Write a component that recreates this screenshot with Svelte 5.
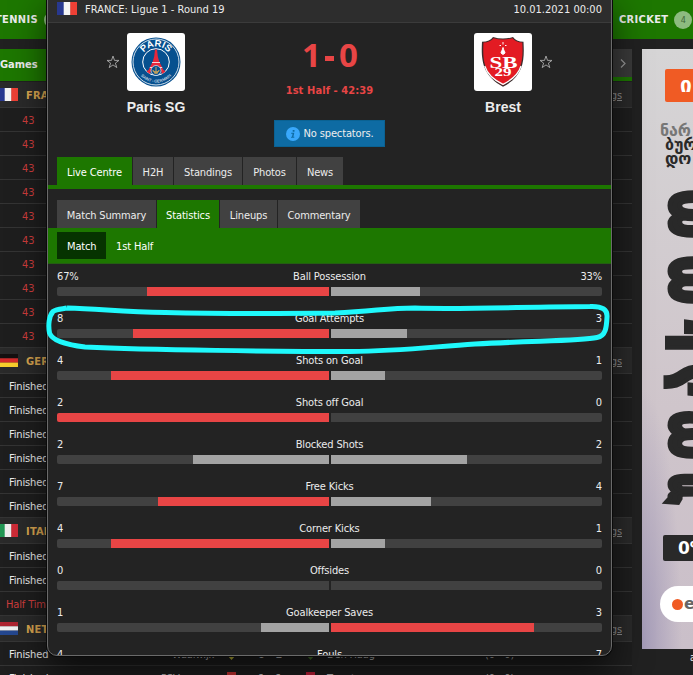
<script>
    const matchTabs = [
        { label: "Live Centre", width: 75, active: true },
        { label: "H2H", width: 40 },
        { label: "Standings", width: 68 },
        { label: "Photos", width: 53 },
        { label: "News", width: 46 },
    ];

    const centreTabs = [
        { label: "Match Summary", width: 99 },
        { label: "Statistics", width: 62, active: true },
        { label: "Lineups", width: 57 },
        { label: "Commentary", width: 82 },
    ];

    const stats = [
        { name: "Ball Possession", home: 67, away: 33, unit: "%" },
        { name: "Goal Attempts", home: 8, away: 3 },
        { name: "Shots on Goal", home: 4, away: 1 },
        { name: "Shots off Goal", home: 2, away: 0 },
        { name: "Blocked Shots", home: 2, away: 2 },
        { name: "Free Kicks", home: 7, away: 4 },
        { name: "Corner Kicks", home: 4, away: 1 },
        { name: "Offsides", home: 0, away: 0 },
        { name: "Goalkeeper Saves", home: 1, away: 3 },
        { name: "Fouls", home: 4, away: 7 },
    ];

    const leagues = [
        { code: "FRANCE", flag: "fr", rows: Array(10).fill("43") },
        { code: "GERMANY", flag: "de", rows: Array(6).fill("Finished") },
        { code: "ITALY", flag: "it", rows: ["Finished", "Finished", "Half Time"] },
        { code: "NETHERLANDS", flag: "nl", rows: ["Finished", "Finished"] },
    ];

    const dutch = [
        { home: "Waalwijk", homeX: 172, score: "0 - 1", away: "Den Haag", ht: "(0 - 0)", c1: "#c9c23a", c2: "#4c7a2f" },
        { home: "PSV", homeX: 161, score: "1 - 1", away: "Twente", ht: "(0 - 0)", c1: "#c33", c2: "#c8203a" },
    ];

    // home se redondea hacia abajo, away se queda con el resto
    const homeShare = (s) => (s.home + s.away ? Math.floor((s.home / (s.home + s.away)) * 100) : 0);
    const awayShare = (s) => (s.home + s.away ? 100 - homeShare(s) : 0);

    // letras del banner, de abajo hacia arriba
    const bannerLetters = [
        { ch: "უ", x: 77, y: 456, len: 33 },
        { ch: "ფ", x: 77, y: 411, len: 51 },
        { ch: "ა", x: 77, y: 349, len: 35 },
        { ch: "ს", x: 98, y: 303, len: 38 },
        { ch: "ო", x: 77, y: 256, len: 50 },
        { ch: "დ", x: 77, y: 190, len: 50 },
    ];
</script>

{#snippet flag(kind)}
    <svg class="flag" viewBox="0 0 20 13" preserveAspectRatio="none">
        {#if kind === "fr"}
            <rect width="7" height="13" fill="#28388f" /><rect x="6.7" width="7" height="13" fill="#f4f4f4" /><rect x="13.3" width="6.7" height="13" fill="#ee4035" />
        {:else if kind === "de"}
            <rect width="20" height="4.4" fill="#151010" /><rect y="4.3" width="20" height="4.4" fill="#d62a2a" /><rect y="8.6" width="20" height="4.4" fill="#f8cf2c" />
        {:else if kind === "it"}
            <rect width="7" height="13" fill="#219653" /><rect x="6.7" width="7" height="13" fill="#eee" /><rect x="13.3" width="6.7" height="13" fill="#cf2b37" />
        {:else}
            <rect width="20" height="4.4" fill="#ae2431" /><rect y="4.3" width="20" height="4.4" fill="#f0f0f0" /><rect y="8.6" width="20" height="4.4" fill="#24478f" />
        {/if}
    </svg>
{/snippet}

{#snippet star()}
    <svg class="star" viewBox="0 0 14 14"><path d="M7 1 8.5 5.4H13L9.4 8.1 10.8 12.6 7 9.9 3.2 12.6 4.6 8.1 1 5.4H5.5Z" /></svg>
{/snippet}

<div class="page">
    <nav class="sports">
        <span class="sport">TENNIS <i class="badge">8</i></span>
        <span class="sport right">CRICKET <i class="badge">4</i></span>
    </nav>

    <div class="columns">
        <div class="games">
            <div class="games-bar">
                <span class="games-tab">Games</span>
                <span class="next">
                    <svg viewBox="0 0 8 10"><path d="M2 1 6 5 2 9" /></svg>
                </span>
            </div>
            {#each leagues as league}
                <div class="league">
                    {@render flag(league.flag)}
                    <b>{league.code}</b>
                    <u>Standings</u>
                </div>
                {#each league.rows as row, i}
                    <div class="row" class:live={row === "43"} class:half={row === "Half Time"}>
                        <span class="state">{row}</span>
                        {#if league.flag === "nl"}
                            <svg class="fixture" viewBox="0 0 632 24">
                                <text x={dutch[i].homeX} y="16">{dutch[i].home}</text>
                                <path d="M227 6h9v7l-4.500 5-4.500-5z" fill={dutch[i].c1} />
                                <text x="258" y="16" font-weight="bold">{dutch[i].score}</text>
                                <path d="M306 6h9v7l-4.500 5-4.500-5z" fill={dutch[i].c2} />
                                <text x="327" y="16">{dutch[i].away}</text>
                                <text x="485" y="16">{dutch[i].ht}</text>
                            </svg>
                        {/if}
                    </div>
                {/each}
            {/each}
        </div>

        <aside>
            <div class="banner">
                <div class="offer">ი</div>
                <p class="lead">ნარ</p>
                <p>ბურ</p>
                <p>დო</p>
                <div class="zero">0%</div>
                <div class="brand"><span class="dot"></span>e</div>
                <svg class="big" viewBox="0 0 51 600">
                    {#each bannerLetters as l}
                        <text transform="translate({l.x} {l.y}) rotate(-90)" textLength={l.len} lengthAdjust="spacingAndGlyphs">{l.ch}</text>
                    {/each}
                </svg>
            </div>
            <div class="ad-note">ad</div>
        </aside>
    </div>

    <main class="popup">
        <header>
            {@render flag("fr")}
            <span class="round">FRANCE: Ligue 1 - Round 19</span>
            <time>10.01.2021 00:00</time>
        </header>

        <section class="teams">
            <div class="team home">
                {@render star()}
                <div class="club">
                    <div class="logo">
                        <svg viewBox="0 0 58 58">
                            <defs>
                                <path id="arcTop" d="M13.500 29a15.500 15.500 0 0 1 31 0" />
                                <path id="arcBottom" d="M8.500 29a20.500 20.500 0 0 0 41 0" />
                            </defs>
                            <circle cx="29" cy="29" r="24.500" fill="#06508f" />
                            <circle cx="29" cy="29" r="23" fill="none" stroke="#fff" stroke-width=".8" />
                            <circle cx="29" cy="29" r="13.300" fill="#06508f" stroke="#fff" stroke-width="1" />
                            <path d="M28 16.500h2l.8 7 1.400 5 4 8 2.300 2-3.500 2.500c-1-5-3-6.500-6-6.500s-5 1.500-6 6.500L19.500 38.500l2.300-2 4-8 1.400-5z" fill="#e8273b" />
                            <path d="M25 29.500h8M22.800 34.500h12.400" stroke="#fff" stroke-width=".8" />
                            <circle cx="29" cy="37.500" r="5" fill="#06508f" stroke="#e9eef5" stroke-width=".7" />
                            <path d="M29 34v7M26 37q0 2 3 2 3 0 3-2M27 40h4" stroke="#c1a05b" stroke-width="1.100" fill="none" />
                            <text class="crest-top"><textPath href="#arcTop" startOffset="50%">PARIS</textPath></text>
                            <text class="crest-low"><textPath href="#arcBottom" startOffset="50%">SAINT - GERMAIN</textPath></text>
                        </svg>
                    </div>
                    <b>Paris SG</b>
                </div>
            </div>

            <div class="result">
                <div class="score"><span>1</span><span class="dash"></span><span>0</span></div>
                <div class="clock">1st Half - 42:39</div>
                <div class="notice">
                    <svg viewBox="0 0 14 14">
                        <circle cx="7" cy="7" r="7" fill="#39a8fb" />
                        <path d="M6.700 3h1.800v1.700H6.700zM5.300 5.700h3l-.9 4h1l-.2 1.100H5l.2-1.100h.8l.6-2.900H5.100z" fill="#0e6ba3" />
                    </svg>
                    No spectators.
                </div>
            </div>

            <div class="team away">
                <div class="club">
                    <div class="logo">
                        <svg viewBox="0 0 58 58">
                            <path d="M19 4q10 3 20 0 3 4.500 10.500 4.800c1 18 .5 34-20.500 45C8 42.500 7 26.500 8 8.800q8-.3 11-4.800z" fill="#3a2d2d" />
                            <path d="M19.500 5.200q9.500 2.500 19 0 3 4 9.800 4.400c1 17 .2 32-19.300 42.600C9.500 41.500 8.500 26.700 9.500 9.600q7-.4 10-4.400z" fill="#e31b23" />
                            <path d="M10.800 33c2.500 8.500 8 13.500 18.200 18.300C39 46.500 44.500 41.500 47 33" fill="none" stroke="#fff" stroke-width="1.300" />
                            <path d="M29 14.500c.4 2.500 2 4 2 5.500L29 21.500 27 20c0-1.500 1.600-3 2-5.500zM29 9v2.500M25.500 12.500h1.500M31 12.500h1.500" fill="#fff" stroke="#fff" stroke-width="1" />
                            <text class="sb" x="15.500" y="35" textLength="28" lengthAdjust="spacingAndGlyphs">SB</text>
                            <text class="nr" x="20.500" y="43" textLength="17" lengthAdjust="spacingAndGlyphs">29</text>
                        </svg>
                    </div>
                    <b>Brest</b>
                </div>
                {@render star()}
            </div>
        </section>

        <div class="tabs main-tabs">
            {#each matchTabs as tab}
                <div class="tab" class:active={tab.active} style="width: {tab.width}px">{tab.label}</div>
            {/each}
        </div>
        <div class="tabs">
            {#each centreTabs as tab}
                <div class="tab" class:active={tab.active} style="width: {tab.width}px">{tab.label}</div>
            {/each}
        </div>
        <div class="periods">
            <span class="period chosen">Match</span>
            <span class="period">1st Half</span>
        </div>

        <section class="stats">
            {#each stats as s}
                <div class="stat">
                    <div class="labels">
                        <span>{s.home}{s.unit ?? ""}</span>
                        <span class="name">{s.name}</span>
                        <span>{s.away}{s.unit ?? ""}</span>
                    </div>
                    <div class="bars">
                        <div class="bar left"><i class:lead={s.home > s.away} style="width: {homeShare(s)}%"></i></div>
                        <div class="bar"><i class:lead={s.away > s.home} style="width: {awayShare(s)}%"></i></div>
                    </div>
                </div>
            {/each}
        </section>
    </main>

    <svg class="marker" viewBox="0 0 693 675">
        <path d="M67 308C100 309 122 311.500 165 312.500C230 314 290 313.500 335 313C375 311.500 385 308 415 308C460 309.500 520 307 590 306.500C603 306 607.500 310 607 317C606.500 327 606 336 597 337.500C580 341 540 340.500 475 344C430 347 400 351 350 351.500C280 351.500 150 350 85 347C66 345 52 340 49.500 333C48 325 49 316 53 311.500C57 308.500 63 309 67 308" />
    </svg>
</div>

<style>
:global(body) {
    background: #202020;
}

.page {
    position: relative;
    width: 693px;
    height: 675px;
    overflow: hidden;
    background: #212121;
    color: #ececec;
    font: 11px/14px "DejaVu Sans Condensed", "DejaVu Sans", sans-serif;
    font-stretch: condensed;
    letter-spacing: -0.14px;
}

.sports {
    display: flex;
    justify-content: space-between;
    height: 39px;
    background: #1d7700;
    font-weight: bold;
    letter-spacing: 0.35px;
}

.sport {
    display: flex;
    align-items: center;
    gap: 6px;
    margin-left: -5px;
    padding-top: 1px;
}

.sport.right {
    width: 74px;
    margin: 0;
    flex: none;
}

.badge {
    display: flex;
    align-items: center;
    justify-content: center;
    flex: none;
    width: 18px;
    height: 18px;
    border-radius: 50%;
    background: #8dbb80;
    color: #41683a;
    font-size: 9px;
    font-style: normal;
    font-weight: normal;
}

.columns {
    display: flex;
    gap: 10px;
    padding-top: 10px;
}

.games {
    width: 632px;
    flex: none;
}

.games-bar {
    display: flex;
    justify-content: space-between;
    height: 28px;
    margin-bottom: 1px;
    border-bottom: 4px solid #1d7700;
    background: #3a3a3a;
}

.games-tab {
    width: 60px;
    height: 32px;
    background: #1d7700;
    font-weight: bold;
    line-height: 31px;
    letter-spacing: 0;
}

.next {
    width: 13px;
    padding-top: 9px;
}

.next svg {
    width: 8px;
    height: 11px;
}

.next path {
    fill: none;
    stroke: #999;
    stroke-width: 1.2;
}

.league {
    display: flex;
    align-items: center;
    box-sizing: border-box;
    height: 26px;
    padding: 2px 10px 0 0;
    border-bottom: 1px solid #363636;
    background: #2a2a2a;
}

.league .flag {
    margin: -2px 0 0 -2px;
}

.league b {
    flex: 1;
    margin-left: 8px;
    color: #dba650;
    letter-spacing: 0.2px;
}

.league u {
    color: #8d8d8d;
}

.row {
    position: relative;
    box-sizing: border-box;
    height: 24px;
    border-bottom: 1px solid #343434;
    background: #1e1e1e;
    line-height: 26px;
}

.row .state {
    padding-left: 9px;
}

.row.live .state {
    padding-left: 22px;
    color: #cf3d3d;
}

.row.half .state {
    padding-left: 6px;
    color: #cf3d3d;
}

.fixture {
    position: absolute;
    left: 0;
    top: 0;
    width: 632px;
    height: 24px;
    fill: #c8c8c8;
}

.flag {
    display: block;
    flex: none;
    width: 20px;
    height: 13px;
}

/* banner */
.banner {
    position: relative;
    width: 51px;
    height: 600px;
    overflow: hidden;
    background: radial-gradient(ellipse 40px 260px at 0 100%, #a49bb8, rgba(190, 180, 200, 0)), linear-gradient(#d6d5d6, #cfc5cb 60%, #cabfc9);
    color: #2a2a2a;
}

.offer {
    box-sizing: border-box;
    width: 60px;
    height: 33px;
    margin: 20px 0 22px 23px;
    padding-left: 15px;
    border-radius: 2px;
    background: #f05b24;
    color: #fff;
    font: bold 21px/32px "DejaVu Sans", sans-serif;
}

.banner p {
    margin: 0 0 0 23px;
    font: bold 16px/14px "DejaVu Sans", sans-serif;
    white-space: nowrap;
}

.banner .lead {
    margin-left: 18px;
    color: #777;
}

.zero {
    box-sizing: border-box;
    width: 60px;
    height: 26px;
    margin: 369px 0 0 21px;
    padding-left: 15px;
    border-radius: 2px;
    background: #292929;
    color: #fff;
    font: bold 17px/26px "DejaVu Sans", sans-serif;
}

.brand {
    display: flex;
    align-items: center;
    width: 70px;
    height: 36px;
    margin: 25px 0 0 18px;
    border-radius: 18px;
    background: #fff;
    color: #666;
    font: bold 16px/34px "DejaVu Sans", sans-serif;
}

.dot {
    width: 11px;
    height: 11px;
    margin: 0 1px 0 12px;
    border-radius: 50%;
    background: #f05b24;
}

.big {
    position: absolute;
    left: 0;
    top: 0;
    width: 51px;
    height: 600px;
    fill: #292929;
    stroke: #292929;
    stroke-width: 5;
    font: bold 88px "DejaVu Sans", sans-serif;
    letter-spacing: 0;
}

.ad-note {
    padding: 2px 0 0 48px;
    font-size: 10px;
}

/* match window */
.popup {
    position: absolute;
    left: 47px;
    top: -10px;
    box-sizing: border-box;
    width: 565px;
    height: 666px;
    overflow: hidden;
    border: 1px solid #6a6a6a;
    border-radius: 10px;
    background: #232323;
    box-shadow: 0 0 0 1px #0a0a0a, 0 18px 36px rgba(0, 0, 0, 0.6);
}

header {
    display: flex;
    align-items: center;
    box-sizing: border-box;
    height: 32px;
    padding: 6px 9px 0;
    border-bottom: 1px solid #3b3b3b;
    background: #2d2d2d;
    letter-spacing: 0.02px;
}

header .flag {
    margin-top: -2px;
}

.round {
    flex: 1;
    margin-left: 8px;
}

.teams {
    display: flex;
    justify-content: space-between;
    height: 124px;
    padding: 10px 58px 0;
}

.team {
    display: flex;
    gap: 7px;
}

.club {
    display: flex;
    flex-direction: column;
    align-items: center;
    width: 58px;
}

.club b {
    margin-top: 8px;
    font: bold 14px/16px "Liberation Sans", Arial, sans-serif;
    letter-spacing: 0.05px;
    white-space: nowrap;
}

.logo {
    width: 58px;
    height: 58px;
    border-radius: 3px;
    background: #fff;
}

.logo svg {
    display: block;
}

.crest-top {
    fill: #fff;
    font: bold 9.5px "Liberation Sans", sans-serif;
    text-anchor: middle;
    letter-spacing: 0;
}

.crest-low {
    fill: #fff;
    font: 4px "Liberation Sans", sans-serif;
    text-anchor: middle;
    letter-spacing: 0;
}

.sb {
    fill: #fff;
    font: bold 17px "Liberation Serif", serif;
    letter-spacing: 0;
}

.nr {
    fill: #fff;
    font: bold 13px "Liberation Serif", serif;
    letter-spacing: 0;
}

.star {
    width: 14px;
    height: 14px;
    margin-top: 22px;
    fill: none;
    stroke: #aaa;
    stroke-width: 0.9;
}

.result {
    display: flex;
    flex-direction: column;
    align-items: center;
    color: #e84545;
}

.score {
    display: flex;
    align-items: center;
    gap: 5px;
    height: 40px;
    margin-top: 2px;
    font: bold 33px/40px "Noto Sans", sans-serif;
    letter-spacing: -1px;
}

.dash {
    width: 9px;
    height: 5px;
    margin-top: 6px;
    background: #e84545;
}

.clock {
    margin-top: 9px;
    font-weight: bold;
    letter-spacing: 0.1px;
}

.notice {
    display: flex;
    align-items: center;
    justify-content: center;
    box-sizing: border-box;
    width: 111px;
    height: 27px;
    margin-top: 22px;
    padding-top: 1px;
    gap: 4px;
    border: 1px solid #0a6293;
    background: #0e6ba3;
    color: #eee;
}

.notice svg {
    width: 14px;
    height: 14px;
}

.tabs {
    display: flex;
    gap: 1px;
    padding: 0 9px;
}

.main-tabs {
    margin-bottom: 11px;
    border-bottom: 4px solid #1d7700;
}

.tab {
    height: 28px;
    background: #414141;
    line-height: 32px;
    text-align: center;
}

.tab.active {
    background: #1d7700;
    color: #fff;
}

.periods {
    display: flex;
    box-sizing: border-box;
    height: 36px;
    padding: 4px 9px;
    background: #1d7700;
    border-bottom: 1px solid #245f12;
    color: #fff;
}

.period {
    height: 27px;
    padding: 0 9px 0 10px;
    line-height: 30px;
}

.period.chosen {
    box-sizing: border-box;
    width: 49px;
    background: #063300;
}

.stats {
    padding: 5px 9px 0;
}

.stat {
    height: 42px;
}

.labels {
    display: grid;
    grid-template-columns: 1fr auto 1fr;
    box-sizing: border-box;
    height: 18px;
    padding-top: 1px;
}

.labels span:last-child {
    text-align: right;
}

.bars {
    display: grid;
    grid-template-columns: 272px 271px;
    gap: 2px;
}

.bar {
    display: flex;
    height: 9px;
    overflow: hidden;
    border-radius: 0 2px 2px 0;
    background: #414141;
}

.bar.left {
    justify-content: flex-end;
    border-radius: 2px 0 0 2px;
}

.bar i {
    background: #a3a3a3;
}

.bar i.lead {
    background: #e84545;
}

.marker {
    position: absolute;
    left: 0;
    top: 0;
    width: 693px;
    height: 675px;
    fill: none;
    stroke: #1ff9fc;
    stroke-width: 5;
    stroke-linejoin: round;
}
</style>
